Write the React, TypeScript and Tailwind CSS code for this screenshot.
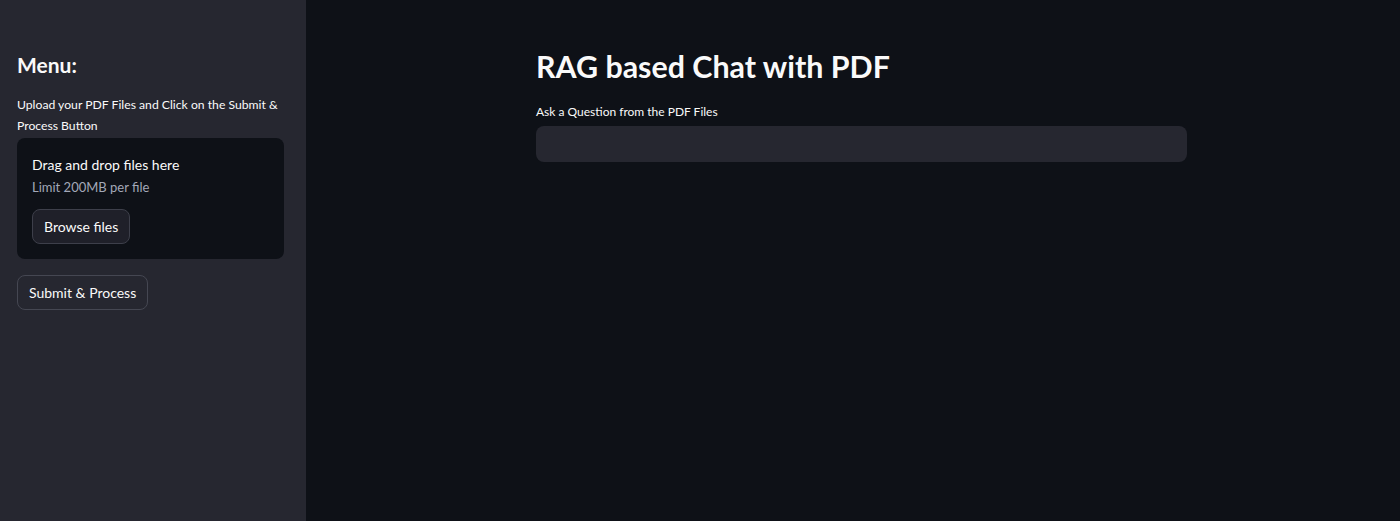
export default function App() {
  return (
    <div
      className="flex h-[521px] w-full bg-[#0e1117] text-[#fafafa]"
      style={{ fontFamily: "Lato, 'Noto Sans', sans-serif" }}
    >
      {/* Sidebar */}
      <aside className="w-[306px] shrink-0 bg-[#262730] px-[17px] pt-[52px]">
        <h2 className="text-[21px] font-bold leading-[26px]">Menu:</h2>
        <p className="mt-[16px] text-[12.2px] leading-[21px]">
          Upload your PDF Files and Click on the Submit &amp; Process Button
        </p>
        <div className="mt-[2px] w-[267px] rounded-lg bg-[#0e1117] px-[15px] pt-[17px] pb-[15px]">
          <div className="text-[14px] leading-[20px]">Drag and drop files here</div>
          <div className="mt-[3px] text-[13px] leading-[18px] text-[#a3a8b8]">Limit 200MB per file</div>
          <button className="mt-[13px] h-[35px] rounded-lg border border-[#3d3f4a] bg-[#1f2029] px-[11px] text-[14px]">
            Browse files
          </button>
        </div>
        <button className="mt-[16px] h-[35px] rounded-lg border border-[#454752] bg-[#262730] px-[11px] text-[14px]">
          Submit &amp; Process
        </button>
      </aside>

      {/* Main */}
      <main className="flex-1 pl-[230px] pt-[44px]">
        <div className="w-[651px]">
          <h1 className="text-[30.4px] font-bold leading-[44px]">RAG based Chat with PDF</h1>
          <label className="mt-[16px] block text-[12px] leading-[16px]">
            Ask a Question from the PDF Files
          </label>
          <input
            className="mt-[6px] h-[36px] w-full rounded-lg bg-[#262730] px-3 text-[14px] outline-none"
            type="text"
          />
        </div>
      </main>
    </div>
  );
}
